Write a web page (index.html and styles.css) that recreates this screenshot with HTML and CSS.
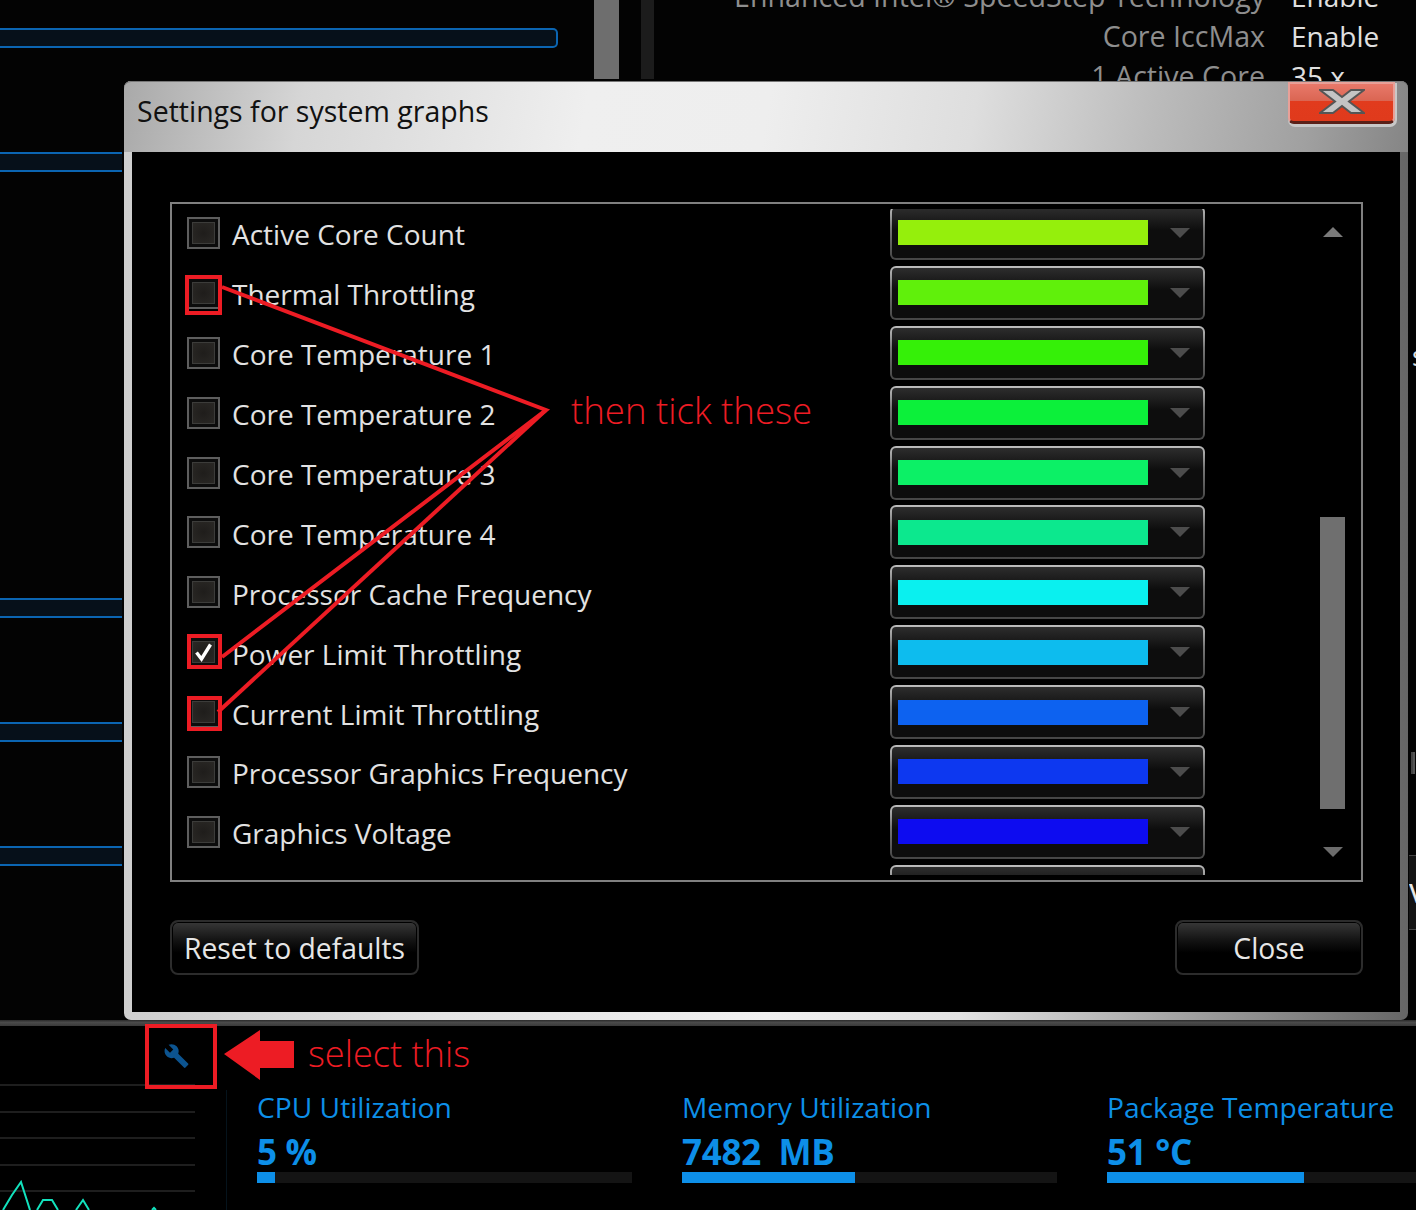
FILE: index.html
```html
<!DOCTYPE html>
<html lang="en">
<head>
<meta charset="utf-8">
<title>Settings for system graphs</title>
<link rel="stylesheet" href="styles.css">
</head>
<body>
<div class="page">
  <section class="backdrop">
    <div class="bars">
      <div class="bar bar-wide"></div>
      <div class="bar"></div>
      <div class="bar bar-far"></div>
      <div class="bar"></div>
      <div class="bar"></div>
    </div>
    <div class="col col-grey"></div>
    <div class="col col-dark"></div>
    <div class="specs">
      <span class="spec-k">Enhanced Intel® SpeedStep Technology</span><span class="spec-v">Enable</span>
      <span class="spec-k">Core IccMax</span><span class="spec-v">Enable</span>
      <span class="spec-k">1 Active Core</span><span class="spec-v">35 x</span>
    </div>
  </section>
  <div class="divider"></div>
  <section class="bottom">
    <div class="graph-panel">
      <div class="wrench-slot">
        <svg class="wrench" viewBox="0 0 24 24"><path d="M22.7 19l-9.1-9.1c.9-2.3.4-5-1.5-6.9-2-2-5-2.4-7.4-1.3L9 6 6 9 1.6 4.7C.4 7.1.9 10.1 2.9 12.1c1.9 1.9 4.6 2.4 6.9 1.5l9.1 9.1c.4.4 1 .4 1.4 0l2.3-2.3c.5-.4.5-1.1.1-1.4z"/></svg>
      </div>
      <div class="gridline"></div>
      <div class="gridline"></div>
      <div class="gridline"></div>
      <div class="gridline"></div>
      <div class="gridline"></div>
      <svg class="chart" viewBox="0 0 195 30"><polyline points="3,30 12,15 21,2 30,30"/><polyline points="37,30 43,20 52,20 58,30"/><polyline points="76,30 83,20 89,30"/><polyline points="152,30 154,28 156,30"/></svg>
    </div>
    <div class="stats">
      <div class="stat">
        <div class="stat-name">CPU Utilization</div>
        <div class="stat-value">5 %</div>
        <div class="meter"><div class="fill fill-cpu"></div></div>
      </div>
      <div class="stat">
        <div class="stat-name">Memory Utilization</div>
        <div class="stat-value">7482&nbsp; MB</div>
        <div class="meter"><div class="fill fill-mem"></div></div>
      </div>
      <div class="stat">
        <div class="stat-name">Package Temperature</div>
        <div class="stat-value">51 °C</div>
        <div class="meter"><div class="fill fill-pkg"></div></div>
      </div>
    </div>
  </section>

  <div class="edge-text edge-s">s</div>
  <div class="edge-mark"></div>
  <div class="edge-band"><span>v</span></div>

  <div class="dialog">
    <header class="titlebar">
      <h1 class="title">Settings for system graphs</h1>
      <button class="close-x" aria-label="Close">
        <svg viewBox="0 0 46 25"><polygon points="1,1 14,1 23,8 32,1 45,1 30,12.5 45,24 32,24 23,17 14,24 1,24 16,12.5"/></svg>
      </button>
    </header>
    <div class="dialog-body">
      <div class="listbox">
        <div class="viewport">
          <div class="rows">
            <div class="row"><span class="check"></span><span class="label">Active Core Count</span><div class="dropdown"><span class="swatch c1"></span><span class="caret"></span></div></div>
            <div class="row"><span class="check"></span><span class="label">Thermal Throttling</span><div class="dropdown"><span class="swatch c2"></span><span class="caret"></span></div></div>
            <div class="row"><span class="check"></span><span class="label">Core Temperature 1</span><div class="dropdown"><span class="swatch c3"></span><span class="caret"></span></div></div>
            <div class="row"><span class="check"></span><span class="label">Core Temperature 2</span><div class="dropdown"><span class="swatch c4"></span><span class="caret"></span></div></div>
            <div class="row"><span class="check"></span><span class="label">Core Temperature 3</span><div class="dropdown"><span class="swatch c5"></span><span class="caret"></span></div></div>
            <div class="row"><span class="check"></span><span class="label">Core Temperature 4</span><div class="dropdown"><span class="swatch c6"></span><span class="caret"></span></div></div>
            <div class="row"><span class="check"></span><span class="label">Processor Cache Frequency</span><div class="dropdown"><span class="swatch c7"></span><span class="caret"></span></div></div>
            <div class="row"><span class="check"><svg viewBox="0 0 33 32"><path d="M9.5 16.5l5 6.5L23.5 8.5"/></svg></span><span class="label">Power Limit Throttling</span><div class="dropdown"><span class="swatch c8"></span><span class="caret"></span></div></div>
            <div class="row"><span class="check"></span><span class="label">Current Limit Throttling</span><div class="dropdown"><span class="swatch c9"></span><span class="caret"></span></div></div>
            <div class="row"><span class="check"></span><span class="label">Processor Graphics Frequency</span><div class="dropdown"><span class="swatch c10"></span><span class="caret"></span></div></div>
            <div class="row"><span class="check"></span><span class="label">Graphics Voltage</span><div class="dropdown"><span class="swatch c11"></span><span class="caret"></span></div></div>
            <div class="row"><span class="check"></span><span class="label"></span><div class="dropdown"></div></div>
          </div>
        </div>
        <div class="scrollbar">
          <span class="arrow-up"></span>
          <span class="thumb"></span>
          <span class="arrow-down"></span>
        </div>
      </div>
      <div class="footer">
        <button class="btn btn-reset">Reset to defaults</button>
        <button class="btn btn-close">Close</button>
      </div>
    </div>
  </div>

  <svg class="marks" viewBox="0 0 1416 1210">
    <rect class="box" x="187" y="277" width="33" height="36"/>
    <rect class="box" x="189" y="636" width="31" height="31"/>
    <rect class="box" x="189" y="698" width="31" height="31"/>
    <rect class="box" x="147" y="1026" width="68" height="61"/>
    <polyline class="lead" points="222,287 546,410 222,657"/>
    <polyline class="lead" points="546,410 218,712"/>
    <polygon class="pointer" points="224,1054 260,1030 260,1041 294,1041 294,1068 260,1068 260,1080"/>
  </svg>
  <div class="note note-tick">then tick these</div>
  <div class="note note-select">select this</div>
</div>
</body>
</html>
```
FILE: styles.css
```css
* { box-sizing: border-box; }
html, body { margin: 0; padding: 0; background: #000; }
body { font-family: "Open Sans", "Noto Sans", sans-serif; }

.page {
  position: relative;
  width: 1416px;
  height: 1210px;
  overflow: hidden;
  background: #000;
  display: flex;
  flex-direction: column;
}

/* Application behind the dialog */
.backdrop {
  height: 1020px;
  flex: none;
  display: flex;
  align-items: flex-start;
  background: #030303;
}
.bars { width: 594px; flex: none; padding-top: 28px; display: flex; flex-direction: column; gap: 104px; }
.bar {
  width: 122px;
  height: 20px;
  background: #06101a;
  border-top: 2px solid #0b65b2;
  border-bottom: 2px solid #0b65b2;
}
.bar-wide { width: 558px; border-right: 2px solid #0b65b2; border-radius: 0 5px 5px 0; }
.bar-far { margin-top: 322px; }
.col { height: 79px; flex: none; }
.col-grey { width: 25px; background: #6e6e6e; }
.col-dark { width: 13px; margin-left: 22px; background: #1c1c1c; }
.specs {
  margin-top: -24px;
  display: grid;
  grid-template-columns: 611px auto;
  column-gap: 26px;
  font-size: 28.6px;
  line-height: 40px;
  white-space: nowrap;
}
.spec-k { text-align: right; color: #8e8e8e; }
.spec-v { color: #e0e0e0; font-size: 28px; }

.divider { height: 6px; flex: none; background: linear-gradient(#2a2a2a, #4a4a4a 40%, #3a3a3a); }

/* Bottom strip */
.bottom { height: 184px; flex: none; display: flex; background: #000; }
.graph-panel { position: relative; width: 227px; flex: none; }
.wrench-slot { height: 58px; padding: 17px 0 0 163px; }
.wrench { display: block; width: 27px; height: 26px; fill: #0c5490; }
.gridline { width: 195px; height: 2px; background: #1e1e1e; margin-bottom: 24.6px; }
.chart { position: absolute; left: 0; bottom: 0; width: 195px; height: 30px; fill: none; stroke: #12e2bd; stroke-width: 2; }
.graph-panel::after { content: ""; position: absolute; right: 0; top: 64px; bottom: 0; width: 1px; background: #05131c; }
.stats { display: flex; gap: 50px; padding: 61px 0 0 30px; }
.stat { width: 375px; flex: none; }
.stat-name { font-size: 28.2px; line-height: 40px; color: #0d8fe8; white-space: nowrap; }
.stat-value { margin-top: 2px; font-size: 35px; font-weight: 700; line-height: 46px; color: #0d8fe8; white-space: nowrap; letter-spacing: -.3px; }
.meter { height: 11px; margin-top: -3px; background: #141414; }
.fill { height: 100%; background: #0d8fe8; }
.fill-cpu { width: 18px; }
.fill-mem { width: 173px; }
.fill-pkg { width: 197px; }

/* Slivers of the app visible beyond the dialog's right edge */
.edge-text { position: absolute; left: 1412px; top: 336px; font-size: 27px; line-height: 40px; color: #e0e0e0; }
.edge-mark { position: absolute; left: 1411px; top: 752px; width: 4px; height: 22px; border-left: 2px solid #444; border-right: 2px solid #555; }
.edge-band { position: absolute; left: 1409px; top: 855px; width: 7px; height: 75px; background: #141414; border-top: 1px solid #444; border-bottom: 1px solid #444; color: #e8e8e8; font-size: 34px; line-height: 68px; overflow: hidden; }

/* Dialog */
.dialog {
  position: absolute;
  left: 124px;
  top: 81px;
  width: 1284px;
  height: 939px;
  border-radius: 7px;
  padding: 0 8px 8px;
  display: flex;
  flex-direction: column;
  background: linear-gradient(to right, #cfcfcf, #e4e4e4 25%, #f0f0f0 50%, #e2e2e2 65%, #999 85%, #666 100%);
}
.titlebar {
  position: relative;
  height: 71px;
  flex: none;
  margin: 0 -8px;
  padding-left: 13px;
  border-radius: 7px 7px 0 0;
  display: flex;
  align-items: center;
  background: linear-gradient(100deg, #a9a9a9 0, #d6d6d6 14%, #efefef 36%, #eeeeee 50%, #dedede 66%, #bbb 80%, #a0a0a0 92%, #858585 100%);
  box-shadow: inset 0 1px 0 #777;
}
.title { margin: 0 0 12px; font-size: 28.5px; font-weight: 400; line-height: 40px; color: #111; }
.close-x {
  position: absolute;
  right: 13px;
  top: 1px;
  width: 107px;
  height: 42px;
  padding: 5px 0 0;
  display: flex;
  justify-content: center;
  align-items: flex-start;
  border: 2px solid #e8a098;
  border-bottom: 3px solid #5a2018;
  border-radius: 0 0 6px 6px;
  background: linear-gradient(#e8796a, #da6552 46%, #e13b1d 47%, #e03a1c);
  box-shadow: 1px 2px 0 1px #c8c8c8;
}
.close-x svg { display: block; flex: none; width: 46px; height: 25px; fill: #c4c4c4; stroke: #555; stroke-width: 2; }
.dialog-body { flex: 1; background: #000; padding: 50px 37px 0 38px; }

.listbox {
  height: 680px;
  border: 2px solid #808080;
  padding-top: 5px;
  display: flex;
}
.viewport { width: 1148px; height: 666px; overflow: hidden; flex: none; }
.rows { margin-top: -6px; }
.row { height: 59.9px; display: flex; align-items: center; padding-left: 15px; }
.check {
  position: relative;
  width: 33px;
  height: 32px;
  flex: none;
  border: 2px solid #5e5e5e;
  background: #0c0c0c;
}
.check::before {
  content: "";
  position: absolute;
  inset: 3px;
  background: radial-gradient(#1f1d1b, #2b2926);
  box-shadow: inset 0 0 0 1px #3c3c3a;
}
.check svg { position: absolute; left: -2px; top: -2px; width: 33px; height: 32px; fill: none; stroke: #fff; stroke-width: 3.4; }
.label {
  width: 658px;
  margin-left: 12px;
  padding-top: 3px;
  flex: none;
  font-size: 28px;
  line-height: 40px;
  color: #e2e2e2;
  white-space: nowrap;
}
.dropdown {
  width: 315px;
  height: 54px;
  flex: none;
  padding: 0 6px;
  display: flex;
  align-items: center;
  gap: 22px;
  border: 2px solid transparent;
  border-radius: 6px;
  background: linear-gradient(#2d2d2d, #0d0d0d 45%) padding-box, linear-gradient(#bdbdbd, #777 40%, #454545) border-box;
}
.swatch { width: 250px; height: 25px; flex: none; }
.caret { width: 0; height: 0; border-left: 10px solid transparent; border-right: 10px solid transparent; border-top: 10px solid #4c4c4c; }
.c1 { background: #95ef0c; }
.c2 { background: #60f00b; }
.c3 { background: #35f008; }
.c4 { background: #0cf03a; }
.c5 { background: #0cf066; }
.c6 { background: #0ce88e; }
.c7 { background: #0af0ef; }
.c8 { background: #0dbcee; }
.c9 { background: #0d62f0; }
.c10 { background: #0d38f0; }
.c11 { background: #0d0cf0; }

.scrollbar { width: 25px; flex: none; display: flex; flex-direction: column; align-items: center; padding-top: 18px; }
.arrow-up { width: 0; height: 0; border-left: 10px solid transparent; border-right: 10px solid transparent; border-bottom: 10px solid #7a7a7a; }
.thumb { width: 25px; height: 292px; margin-top: 280px; background: #6f6f6f; }
.arrow-down { width: 0; height: 0; margin-top: 38px; border-left: 10px solid transparent; border-right: 10px solid transparent; border-top: 10px solid #6c6c6c; }

.footer { display: flex; justify-content: space-between; margin-top: 38px; }
.btn {
  height: 55px;
  padding: 0;
  border: 2px solid #2c2c2c;
  border-radius: 8px;
  font: inherit;
  font-size: 28.3px;
  color: #e6e6e6;
  background: linear-gradient(#383838, #141414 35%, #000 60%);
  box-shadow: inset 0 0 0 1px #000;
}
.btn-reset { width: 249px; }
.btn-close { width: 188px; }

/* Red annotations drawn over the screenshot */
.marks { position: absolute; left: 0; top: 0; width: 1416px; height: 1210px; pointer-events: none; }
.box { fill: none; stroke: #ed1c24; stroke-width: 4; }
.lead { fill: none; stroke: #ed1c24; stroke-width: 4; stroke-linejoin: miter; }
.pointer { fill: #ed1c24; }
.note { position: absolute; font-weight: 300; line-height: 50px; color: #ed1c24; white-space: nowrap; }
.note-tick { left: 571px; top: 385px; font-size: 36.6px; }
.note-select { left: 308px; top: 1028px; font-size: 36.2px; }
```
